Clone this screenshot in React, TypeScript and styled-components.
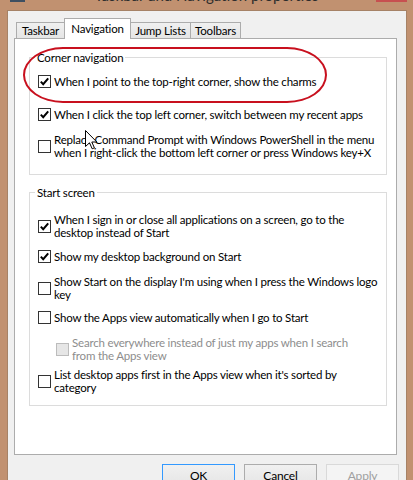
import React from 'react'
import styled, { createGlobalStyle } from 'styled-components'

const GlobalStyle = createGlobalStyle`
    html, body {
        margin: 0;
        padding: 0;
        background: #c19170;
    }
    body {
        font-family: Lato, 'Noto Sans', 'Liberation Sans', sans-serif;
        font-size: 11.5px;
        letter-spacing: -0.2px;
        color: #000;
    }
    * {
        box-sizing: border-box;
    }
`

const Frame = styled.div`
    position: relative;
    width: 413px;
    height: 480px;
    overflow: hidden;
    background: #c19170;
    display: flex;
    flex-direction: column;
`

const TitleBar = styled.div`
    height: 10px;
    flex: none;
    overflow: hidden;
    display: grid;
    grid-template-columns: 1fr auto 1fr;
    grid-template-rows: 10px;
    align-items: end;
`

const AppIcon = styled.div`
    justify-self: start;
    width: 15px;
    height: 12px;
    margin: 0 0 8px 10px;
    background: #3e4f61;
`

const Title = styled.div`
    font-size: 15px;
    letter-spacing: 0;
    line-height: 16px;
    color: #2d2d2d;
    margin-bottom: 7px;
    white-space: nowrap;
`

const CloseBox = styled.div`
    justify-self: end;
    width: 31px;
    height: 20px;
    margin: 0 6px 8px 0;
    background: #c75050;
`

const Client = styled.div`
    flex: 1;
    margin: 0 6px 0 7px;
    background: #f0f0f0;
    border: 1px solid #a68266;
    border-bottom: none;
    display: flex;
    flex-direction: column;
`

const TabStrip = styled.div`
    display: flex;
    align-items: flex-end;
    padding: 7px 0 0 8px;
`

const Tab = styled.div<{ $w: number; $active?: boolean }>`
    position: relative;
    width: ${p => p.$w}px;
    height: ${p => (p.$active ? 21 : 16)}px;
    margin-bottom: ${p => (p.$active ? -1 : 0)}px;
    & + & {
        margin-left: -1px;
    }
    z-index: ${p => (p.$active ? 2 : 1)};
    border: 1px solid #acacac;
    border-bottom: none;
    background: ${p =>
        p.$active ? '#fff' : 'linear-gradient(#f0f0f0, #e5e5e5)'};
    display: flex;
    align-items: center;
    justify-content: center;
    line-height: 13px;
    padding-bottom: ${p => (p.$active ? 1 : 0)}px;
`

const Panel = styled.div`
    width: 383px;
    height: 417px;
    margin-left: 6px;
    background: #fff;
    border: 1px solid #acacac;
    padding: 0 0 0 14px;
`

const Group = styled.fieldset<{ $top: number; $bottom: number }>`
    width: 358px;
    margin: ${p => p.$top}px 0 0 0;
    padding: 0 0 ${p => p.$bottom}px 8px;
    border: 1px solid #dcdcdc;
    min-width: 0;
`

const Legend = styled.legend`
    margin-left: -3px;
    padding: 0 2px;
    line-height: 13px;
`

const Row = styled.div<{ $gap: number; $indent?: number }>`
    display: flex;
    align-items: center;
    gap: 3px;
    margin-top: ${p => p.$gap}px;
    padding-left: ${p => p.$indent || 0}px;
`

const Box = styled.div<{ $disabled?: boolean }>`
    flex: none;
    width: 13px;
    height: 13px;
    border: 1px solid ${p => (p.$disabled ? '#bcbcbc' : '#333')};
    background: ${p => (p.$disabled ? '#e6e6e6' : '#fff')};
    display: flex;
    align-items: center;
    justify-content: center;
`

const Label = styled.div<{ $disabled?: boolean }>`
    line-height: 13px;
    white-space: nowrap;
    color: ${p => (p.$disabled ? '#8d8d8d' : '#000')};
`

const ButtonRow = styled.div`
    display: flex;
    justify-content: flex-end;
    gap: 9px;
    margin-top: 9px;
    padding-right: 7px;
`

const Button = styled.div<{ $primary?: boolean; $disabled?: boolean }>`
    width: 73px;
    height: 23px;
    display: flex;
    align-items: center;
    justify-content: center;
    border: 1px solid
        ${p => (p.$primary ? '#3399ff' : p.$disabled ? '#d9d9d9' : '#acacac')};
    background: ${p =>
        p.$disabled ? '#f4f4f4' : 'linear-gradient(#f0f0f0, #e5e5e5)'};
    color: ${p => (p.$disabled ? '#a0a0a0' : '#000')};
    font-size: 12px;
`

// red marker drawn over the screenshot
const Highlight = styled.div`
    position: absolute;
    left: 23px;
    top: 47px;
    width: 304px;
    height: 56px;
    border: 2px solid #c8101e;
    border-radius: 40px / 28px;
    pointer-events: none;
`

const Cursor = styled.svg`
    position: absolute;
    left: 85px;
    top: 130px;
`

const Check = () => (
    <svg width="11" height="11" viewBox="0 0 11 11">
        <polyline
            points="1.8,5.6 4.2,8.2 9.2,2.4"
            fill="none"
            stroke="#000"
            strokeWidth="2"
        />
    </svg>
)

interface OptionProps {
    gap: number
    checked?: boolean
    disabled?: boolean
    indent?: number
    children: React.ReactNode
}

const Option: React.FC<OptionProps> = ({ gap, checked, disabled, indent, children }) => (
    <Row $gap={gap} $indent={indent}>
        <Box $disabled={disabled}>{checked && <Check />}</Box>
        <Label $disabled={disabled}>{children}</Label>
    </Row>
)

export default function App() {
    return (
        <>
            <GlobalStyle />
            <Frame>
                <TitleBar>
                    <AppIcon />
                    <Title>Taskbar and Navigation properties</Title>
                    <CloseBox />
                </TitleBar>
                <Client>
                    <TabStrip>
                        <Tab $w={49}>Taskbar</Tab>
                        <Tab $w={67} $active>
                            Navigation
                        </Tab>
                        <Tab $w={61}>Jump Lists</Tab>
                        <Tab $w={51}>Toolbars</Tab>
                    </TabStrip>
                    <Panel>
                        <Group $top={12} $bottom={15}>
                            <Legend>Corner navigation</Legend>
                            <Option gap={11} checked>
                                When I point to the top-right corner, show the charms
                            </Option>
                            <Option gap={20} checked>
                                When I click the top left corner, switch between my recent apps
                            </Option>
                            <Option gap={12}>
                                Replace Command Prompt with Windows PowerShell in the menu
                                <br />
                                when I right-click the bottom left corner or press Windows key+X
                            </Option>
                        </Group>
                        <Group $top={11} $bottom={11}>
                            <Legend>Start screen</Legend>
                            <Option gap={14} checked>
                                When I sign in or close all applications on a screen, go to the
                                <br />
                                desktop instead of Start
                            </Option>
                            <Option gap={11} checked>
                                Show my desktop background on Start
                            </Option>
                            <Option gap={12}>
                                Show Start on the display I'm using when I press the Windows logo
                                <br />
                                key
                            </Option>
                            <Option gap={10}>
                                Show the Apps view automatically when I go to Start
                            </Option>
                            <Option gap={12} indent={18} disabled>
                                Search everywhere instead of just my apps when I search
                                <br />
                                from the Apps view
                            </Option>
                            <Option gap={6}>
                                List desktop apps first in the Apps view when it's sorted by
                                <br />
                                category
                            </Option>
                        </Group>
                    </Panel>
                    <ButtonRow>
                        <Button $primary>OK</Button>
                        <Button>Cancel</Button>
                        <Button $disabled>Apply</Button>
                    </ButtonRow>
                </Client>
                <Highlight />
                <Cursor width="13" height="20" viewBox="0 0 13 20">
                    <polygon
                        points="0.5,0.5 0.5,16.5 4.5,12.8 7.2,18.8 9.4,17.8 6.8,12 11.8,12"
                        fill="#fff"
                        stroke="#000"
                        strokeWidth="1"
                        strokeLinejoin="miter"
                    />
                </Cursor>
            </Frame>
        </>
    )
}
